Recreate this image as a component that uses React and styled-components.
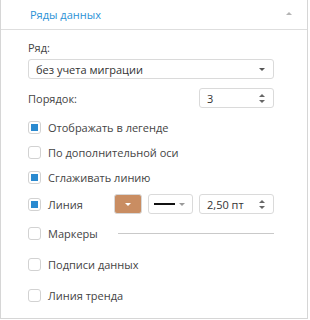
import React from 'react'
import styled, { createGlobalStyle } from 'styled-components'

const Global = createGlobalStyle`
  html, body { margin: 0; padding: 0; background: #fff; }
  body { font-family: "Open Sans", "DejaVu Sans", sans-serif; font-size: 11px; color: #444; }
`

const Panel = styled.div`
  width: 308px;
  height: 319px;
  box-sizing: border-box;
  border: 1px solid #d6d6d6;
  border-top: none;
  background: #fff;
`

const Header = styled.div`
  height: 29px;
  border-bottom: 1px solid #dedede;
  display: flex;
  align-items: center;
  justify-content: space-between;
  padding: 0 15px 0 29px;
`

const Title = styled.span`
  color: #2b92d6;
  font-size: 11px;
`

const Caret = styled.span`
  width: 0;
  height: 0;
  border-left: 3px solid transparent;
  border-right: 3px solid transparent;
  border-bottom: 3px solid #b4b4b4;
  margin-top: -2px;
`

const Body = styled.div`
  padding: 0 33px 0 27px;
`

const Label = styled.div`
  margin-top: ${p => p.$gap}px;
  height: 16px;
  line-height: 16px;
`

const Field = styled.div`
  box-sizing: border-box;
  height: 20px;
  width: ${p => (p.$w ? `${p.$w}px` : 'auto')};
  margin-top: ${p => p.$gap || 0}px;
  margin-right: ${p => p.$after || 0}px;
  border: 1px solid #dadada;
  border-radius: 3px;
  background: #fff;
  display: flex;
  align-items: center;
  justify-content: space-between;
  padding: ${p => (p.$tight ? '0 7px 0 5px' : '0 8px 0 7px')};
  color: #333;
  flex: none;
`

const Arrow = styled.span`
  width: 0;
  height: 0;
  border-left: 3px solid transparent;
  border-right: 3px solid transparent;
  border-top: 3px solid ${p => p.$color || '#555'};
`

const Spin = styled.span`
  display: flex;
  flex-direction: column;
  gap: 3px;
  &::before, &::after {
    content: '';
    width: 0;
    height: 0;
    border-left: 3px solid transparent;
    border-right: 3px solid transparent;
  }
  &::before { border-bottom: 3px solid #666; }
  &::after { border-top: 3px solid #666; }
`

const Row = styled.div`
  display: flex;
  align-items: center;
  justify-content: ${p => (p.$spread ? 'space-between' : 'flex-start')};
  height: 20px;
  margin-top: ${p => p.$gap}px;
`

const Box = styled.span`
  box-sizing: border-box;
  width: 13px;
  height: 13px;
  border: 1px solid #d2d2d2;
  border-radius: 3px;
  background: #fff;
  display: flex;
  align-items: center;
  justify-content: center;
  margin-right: 7px;
  flex: none;
  &::after {
    content: '';
    width: 7px;
    height: 7px;
    background: ${p => (p.$on ? '#2a8ad0' : 'transparent')};
  }
`

const Text = styled.span`
  width: ${p => (p.$w ? `${p.$w}px` : 'auto')};
  flex: none;
`

const Swatch = styled.div`
  box-sizing: border-box;
  width: 29px;
  height: 20px;
  border: 1px solid #d8d8d8;
  border-radius: 3px;
  background: #c98d62;
  display: flex;
  align-items: center;
  justify-content: center;
  margin-right: 6px;
`

const Stroke = styled.span`
  width: 21px;
  height: 2px;
  background: #111;
`

const Rule = styled.div`
  flex: 1;
  height: 1px;
  background: #c9c9c9;
  margin-left: 20px;
`

const Check = ({ on, gap, children }) => (
  <Row $gap={gap}>
    <Box $on={on} />
    <Text>{children}</Text>
  </Row>
)

export default function App() {
  return (
    <>
      <Global />
      <Panel>
        <Header>
          <Title>Ряды данных</Title>
          <Caret />
        </Header>
        <Body>
          <Label $gap={10}>Ряд:</Label>
          <Field $gap={3}>
            <span>без учета миграции</span>
            <Arrow />
          </Field>
          <Row $gap={9} $spread>
            <Text>Порядок:</Text>
            <Field $w={75}>
              <span>3</span>
              <Spin />
            </Field>
          </Row>
          <Check on gap={9}>Отображать в легенде</Check>
          <Check gap={5}>По дополнительной оси</Check>
          <Check on gap={5}>Сглаживать линию</Check>
          <Row $gap={7}>
            <Box $on />
            <Text $w={66}>Линия</Text>
            <Swatch>
              <Arrow $color="#fff" />
            </Swatch>
            <Field $w={45} $after={6} $tight>
              <Stroke />
              <Arrow $color="#999" />
            </Field>
            <Field $w={75}>
              <span>2,50 пт</span>
              <Spin />
            </Field>
          </Row>
          <Row $gap={9}>
            <Box />
            <Text>Маркеры</Text>
            <Rule />
          </Row>
          <Check gap={11}>Подписи данных</Check>
          <Check gap={11}>Линия тренда</Check>
        </Body>
      </Panel>
    </>
  )
}
